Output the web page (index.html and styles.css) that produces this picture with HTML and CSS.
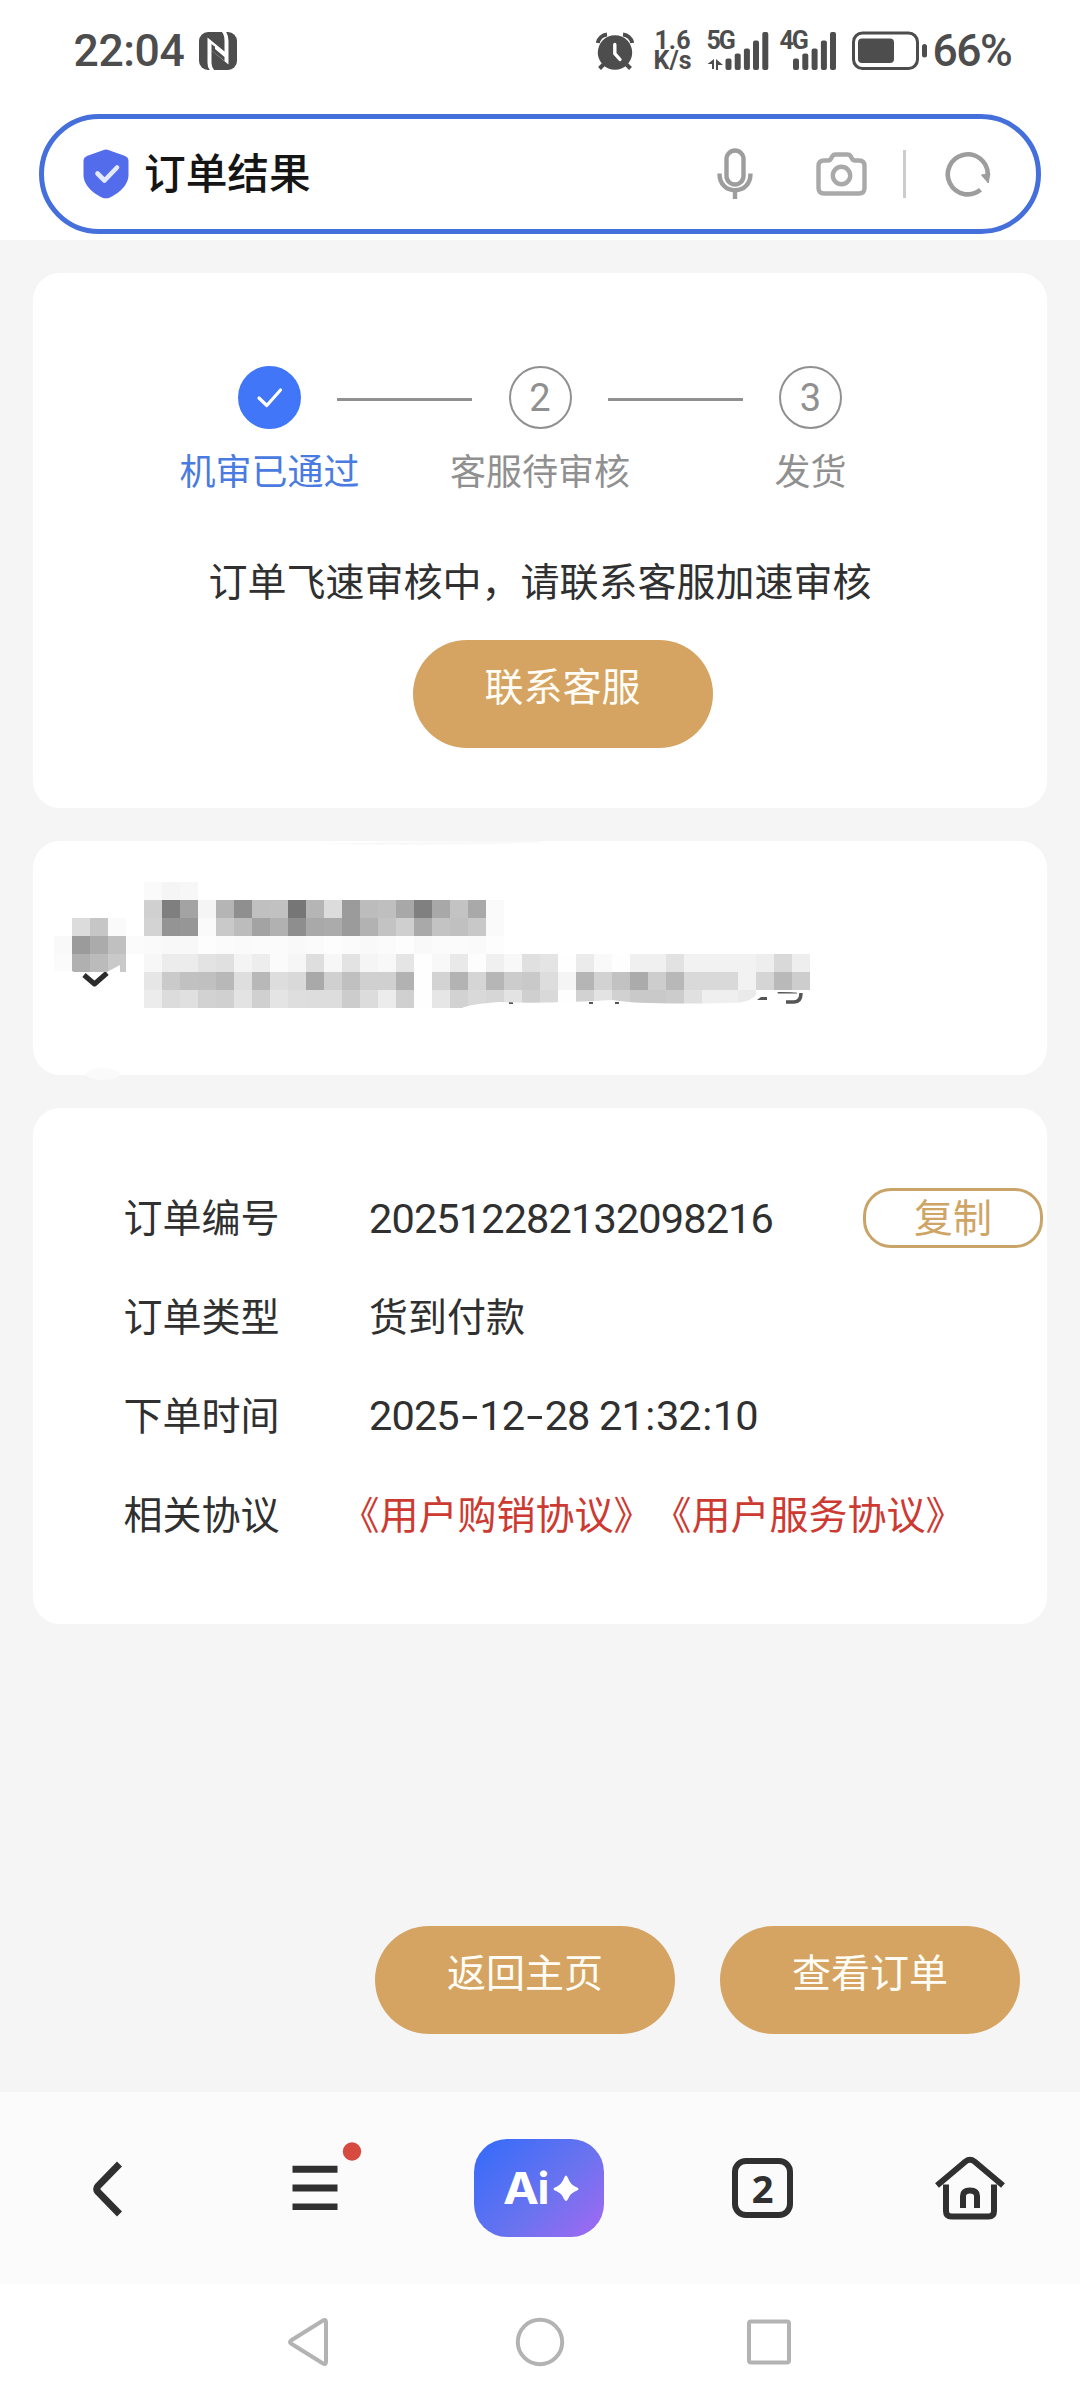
FILE: index.html
```html
<!DOCTYPE html>
<html lang="zh-CN">
<head>
<meta charset="utf-8">
<title>订单结果</title>
<link rel="stylesheet" href="styles.css">
</head>
<body>
<div class="screen">
  <header class="top">
    <div class="status">
      <span class="clock">22:04</span>
      <svg class="nfc" width="38" height="38" viewBox="0 0 38 38">
        <rect width="38" height="38" rx="9" fill="#4d4d4d"/>
        <path d="M12 39Q8.500 37 8.500 31V5.500L25.500 19.500V9Q25.500 2 22 -1L26.500 -1Q29.500 3 29.500 9V32.500L12.500 18.500V31Q12.500 35 16 39Z" fill="#fff"/>
        <path d="M12.500 12V18.500L25.500 29V25L16 17V14.800Z" fill="#4d4d4d"/>
      </svg>
      <svg class="alarm" width="38" height="38" viewBox="0 0 38 38">
        <circle cx="19" cy="20.500" r="17.200" fill="#4d4d4d"/>
        <path d="M1.800 11A10.500 10.500 0 0 1 11 2.500M36.200 11A10.500 10.500 0 0 0 27 2.500M7.500 32.500L3.500 36.500M30.500 32.500L34.500 36.500" fill="none" stroke="#4d4d4d" stroke-width="4"/>
        <path d="M18.800 12.500V21.500L24 27.500" fill="none" stroke="#fff" stroke-width="3.400" stroke-linecap="round"/>
      </svg>
      <span class="speed"><span>1.6</span><span>K/s</span></span>
      <span class="signal">
        <span class="net">5G</span>
        <svg width="64" height="40" viewBox="0 0 64 40">
          <path d="M7 28V38H5V33H0.500ZM9 28L16 34H11V39H9Z"/>
          <rect x="18.500" y="27.500" width="6" height="11.500" rx="2"/><rect x="27.700" y="22.500" width="6" height="16.500" rx="2"/><rect x="36.900" y="17.500" width="6" height="21.500" rx="2"/><rect x="46" y="9.500" width="6" height="29.500" rx="2"/><rect x="55.300" y="1" width="6" height="38" rx="2"/>
        </svg>
      </span>
      <span class="signal signal-b">
        <span class="net">4G</span>
        <svg width="58" height="40" viewBox="0 0 58 40">
          <rect x="13" y="27.500" width="6" height="11.500" rx="2"/><rect x="22.300" y="22.500" width="6" height="16.500" rx="2"/><rect x="31.600" y="17.500" width="6" height="21.500" rx="2"/><rect x="40.900" y="9.500" width="6" height="29.500" rx="2"/><rect x="50" y="1" width="6" height="38" rx="2"/>
        </svg>
      </span>
      <svg class="battery" width="76" height="40" viewBox="0 0 76 40">
        <rect x="1.500" y="2" width="64" height="35.500" rx="9" fill="none" stroke="#4d4d4d" stroke-width="3"/>
        <rect x="6" y="7.500" width="36" height="24.500" rx="4" fill="#4d4d4d"/>
        <rect x="70" y="13" width="5" height="13.500" rx="2.500" fill="#4d4d4d"/>
      </svg>
      <span class="percent">66%</span>
    </div>
    <div class="search">
      <svg class="shield" width="46" height="50" viewBox="0 0 46 50">
        <path d="M20 1.200Q23 0 26 1.200L41.500 6.700Q45.500 8.300 45.500 12V26C45.500 37 34 45.500 26.500 48.700Q23 50 19.500 48.700C12 45.500 0.500 37 0.500 26V12Q0.500 8.300 4.500 6.700Z" fill="#536cec"/>
        <path d="M14.500 24.500L21.500 31.500L34 18.500" fill="none" stroke="#e3e9ff" stroke-width="4.600" stroke-linecap="round" stroke-linejoin="round"/>
      </svg>
      <h1 class="title">订单结果</h1>
      <svg class="mic" width="36" height="52" viewBox="0 0 36 52" fill="none" stroke="#9d9d9d" stroke-width="4.400">
        <rect x="9.500" y="2.500" width="17" height="34" rx="8.500"/>
        <path d="M2.500 25.500C2.500 36 9 42.300 18 42.300S33.500 36 33.500 25.500M18 42V51"/>
      </svg>
      <svg class="camera" width="51" height="44" viewBox="0 0 51 44" fill="none" stroke="#a9a9a9" stroke-width="4.400">
        <path d="M8 8.500H12Q14 8.500 15 6.500L16.500 4Q17.500 2.500 19.500 2.500H31.500Q33.500 2.500 34.500 4L36 6.500Q37 8.500 39 8.500H43Q48.500 8.500 48.500 14V36Q48.500 41.500 43 41.500H8Q2.500 41.500 2.500 36V14Q2.500 8.500 8 8.500Z"/>
        <circle cx="25.500" cy="23.500" r="8.700"/>
      </svg>
      <span class="divider"></span>
      <svg class="refresh" width="46" height="46" viewBox="0 0 46 46">
        <path d="M35.500 38.800A20 20 0 1 1 42.800 23V25" fill="none" stroke="#9d9d9d" stroke-width="4.600"/>
        <path d="M36.500 24L44.800 22.500L43.300 32Z" fill="#9d9d9d" stroke="#9d9d9d" stroke-linejoin="round"/>
      </svg>
    </div>
  </header>

  <main class="content">
    <section class="card progress">
      <ol class="steps">
        <li class="step done">
          <span class="mark"><svg width="28" height="22" viewBox="0 0 28 22"><path d="M3 11L10.800 18.500L24.500 3" fill="none" stroke="#fff" stroke-width="3.200" stroke-linecap="round" stroke-linejoin="round"/></svg></span>
          <span class="label">机审已通过</span>
        </li>
        <li class="line"></li>
        <li class="step"><span class="mark">2</span><span class="label">客服待审核</span></li>
        <li class="line"></li>
        <li class="step"><span class="mark">3</span><span class="label">发货</span></li>
      </ol>
      <p class="message">订单飞速审核中，请联系客服加速审核</p>
      <button class="btn contact">联系客服</button>
    </section>

    <section class="card address">
      <svg class="mosaic" width="1014" height="240" viewBox="33 841 1014 240">
        <ellipse cx="103" cy="1074" rx="17" ry="6" fill="#fafafa"/>
        <path d="M320 844Q400 841 540 841V842.500Q440 846 320 844Z" fill="#f9f9f9"/>
        <path d="M84 975L94.500 984L107 973" fill="none" stroke="#2b2b2b" stroke-width="5" stroke-linejoin="round"/>
        <path d="M757 1000L761 997H767V1000ZM777 991L797 992.500V993.500H778ZM509 1002H513V1004H509ZM589 1002H593V1004H589ZM615 1002H619V1004H615Z" fill="#555"/>
        <path d="M786 1002H794Q801 1002 801 993" fill="none" stroke="#555" stroke-width="3.500"/>
        <clipPath id="wipe"><path d="M40 870H810V993Q777 991 757 993Q753 1003 730 1003Q640 1005 612 1000Q540 1004 500 1002Q470 1004 462 1008H120V965L107 972L95 976Q82 977 72 971H40Z"/></clipPath>
        <g id="cells" clip-path="url(#wipe)" shape-rendering="crispEdges"></g>
      </svg>
    </section>

    <section class="card details">
      <div class="row"><span class="key">订单编号</span><span class="value num">202512282132098216</span><button class="copy">复制</button></div>
      <div class="row"><span class="key">订单类型</span><span class="value">货到付款</span></div>
      <div class="row"><span class="key">下单时间</span><span class="value num date">2025<i>-</i>12<i>-</i>28 21<b>:</b>32<b>:</b>10</span></div>
      <div class="row"><span class="key">相关协议</span><span class="links"><a>《用户购销协议》</a><a>《用户服务协议》</a></span></div>
    </section>

    <div class="actions">
      <button class="btn">返回主页</button>
      <button class="btn">查看订单</button>
    </div>
  </main>

  <nav class="toolbar">
    <svg class="back" width="32" height="56" viewBox="0 0 32 56"><path d="M27.500 3L6 25Q3.500 28 6 31L27.500 53" fill="none" stroke="#303030" stroke-width="7"/></svg>
    <svg class="menu" width="70" height="68" viewBox="0 0 70 68"><path d="M0.500 27.200H45.500M0.500 46H45.500M0.500 65H45.500" stroke="#303030" stroke-width="7"/><circle cx="60" cy="9.500" r="9.200" fill="#d64a40"/></svg>
    <div class="ai">
      <svg width="130" height="98" viewBox="0 0 130 98">
        <text x="29" y="65" textLength="36" lengthAdjust="spacingAndGlyphs">A</text><text x="63.500" y="65">i</text>
        <path d="M92 36.500Q93 36.500 94 39Q96 46 104 49Q105 50 104 51Q96 54 94 60Q93 62 92 62Q91 62 90 60Q88 54 80 51Q79 50 80 49Q88 46 90 39Q91 36.500 92 36.500Z" fill="#fff"/>
      </svg>
    </div>
    <span class="tabs">2</span>
    <svg class="home" width="70" height="64" viewBox="0 0 70 64" fill="none" stroke="#303030" stroke-width="6">
      <path d="M2 29.500L30.500 5.500Q35 2 39.500 5.500L68 29.500"/>
      <path d="M11 28.500V55Q11 60.500 16.500 60.500H53.500Q59 60.500 59 55V28.500"/>
      <path d="M28 52V40Q28 34.500 35 34.500T42 40V52"/>
    </svg>
  </nav>

  <footer class="system">
    <svg width="42" height="50" viewBox="0 0 42 50"><path d="M36 3.500Q39 2 39 5V45Q39 48 36 46.500L4 26.500Q2 25 4 23.500Z"/></svg>
    <svg class="circle" width="50" height="50" viewBox="0 0 50 50"><circle cx="25" cy="25" r="22.200"/></svg>
    <svg width="44" height="46" viewBox="0 0 44 46"><rect x="2" y="2.500" width="40" height="41" rx="2"/></svg>
  </footer>
</div>
<script src="mosaic.js"></script>
</body>
</html>
```
FILE: styles.css
```css
* { box-sizing: border-box; margin: 0; padding: 0; }
body { background: #fff; font-family: Roboto, "Noto Sans CJK SC", sans-serif; color: #303030; }
svg { display: block; flex: none; }
button { font: inherit; border: 0; cursor: pointer; }
.screen { width: 1080px; height: 2400px; display: flex; flex-direction: column; overflow: hidden; }

.top { height: 240px; padding: 0 39px; background: #fff; }
.status { height: 114px; padding: 31px 0 0 34.500px; display: flex; align-items: flex-start; color: #4d4d4d; font-family: Roboto, sans-serif; font-weight: 500; }
.clock { width: 125px; font-size: 44.500px; line-height: 41px; letter-spacing: -.4px; }
.nfc { margin-top: 1px; }
.alarm { margin: 1px 0 0 359px; }
.speed { width: 40px; margin-left: 19px; display: flex; flex-direction: column; align-items: center; font-size: 25px; line-height: 20px; font-weight: 700; white-space: nowrap; }
.speed span { height: 20px; }
.signal { margin-left: 14px; display: grid; fill: #4d4d4d; }
.signal > * { grid-area: 1 / 1; }
.net { font-size: 25px; line-height: 20px; font-weight: 700; letter-spacing: -2px; }
.signal-b { margin-left: 9px; }
.battery { margin-left: 14px; }
.percent { margin-left: 5px; font-size: 44.500px; line-height: 41px; letter-spacing: -1.500px; }

.search { height: 120px; border: 5px solid #456fdb; border-radius: 60px; padding-left: 39px; display: flex; align-items: center; }
.title { margin: 2px 0 0 15px; width: 573px; font-size: 41.700px; font-weight: 500; line-height: 60px; color: #151515; }
.camera { margin-left: 63px; }
.divider { margin-left: 36px; width: 2.500px; height: 48px; background: #ccc; }
.refresh { margin-left: 39.500px; }

.content { height: 1852px; padding: 33px; background: #f5f5f5; display: flex; flex-direction: column; gap: 33px; }
.card { flex: none; width: 1014px; border-radius: 27px; background: #fff; }
.progress { height: 535px; padding-top: 93px; display: flex; flex-direction: column; align-items: center; }
.steps { width: 813px; list-style: none; display: flex; justify-content: center; }
.step { width: 135.500px; display: flex; flex-direction: column; align-items: center; color: #909090; white-space: nowrap; }
.mark { width: 63px; height: 63px; border: 2.500px solid #909090; border-radius: 50%; display: flex; align-items: center; justify-content: center; font-size: 38px; font-weight: 400; }
.label { margin-top: 17px; font-size: 36px; line-height: 54px; }
.done { color: #4a7be0; }
.done .mark { background: #4076f7; border-color: #4076f7; }
.line { width: 135px; height: 3px; margin-top: 32px; background: #909090; }
.message { margin-top: 54px; font-size: 39px; line-height: 58px; }
.btn { width: 300px; height: 108px; padding-bottom: 12px; border-radius: 54px; background: #d5a463; color: #fffdf5; font-size: 39px; line-height: 58px; }
.contact { margin: 28px 0 0 45px; }

.address { height: 234px; }
.mosaic { overflow: visible; }

.details { height: 516px; padding: 60px 0 0 90.500px; font-size: 39px; }
.row { height: 99px; display: flex; align-items: center; line-height: 58px; }
.key { width: 245.500px; flex: none; }
.key, .links, .value { padding-top: 2px; }
.num { font-size: 41.500px; letter-spacing: -.88px; width: 494px; flex: none; white-space: pre; }
.date { padding-top: 0; }
.date i { display: inline-block; width: 20.500px; text-align: center; font-style: normal; transform: scaleX(1.450); }
.date b { display: inline-block; width: 12px; text-align: center; font-weight: 400; }
.copy { width: 180px; height: 60px; flex: none; border: 3px solid #c9a468; border-radius: 28px; background: #fff; color: #cfa566; font-size: 39px; line-height: 50px; padding-top: 3px; }
.links { margin-left: -28.500px; color: #cd3a32; text-spacing-trim: space-all; white-space: nowrap; }

.actions { margin-top: 269px; padding-right: 27px; display: flex; justify-content: flex-end; gap: 45px; }

.toolbar { height: 192px; background: #fbfbfb; display: flex; align-items: flex-start; }
.back { margin: 68.500px 0 0 91.500px; }
.menu { margin: 49.500px 0 0 168.500px; }
.ai { margin: 47px 0 0 112px; width: 130px; height: 98px; border-radius: 33px; background: linear-gradient(135deg, #3a6cf8 8%, #6b73ef 58%, #a468f2 100%); }
.ai text { fill: #fff; font-family: Inter, sans-serif; font-weight: 700; font-size: 44px; }
.tabs { margin: 66px 0 0 128px; width: 61px; height: 60px; border: 6px solid #303030; border-radius: 14px; display: flex; align-items: center; justify-content: center; font: 700 38px/1 "Noto Sans", sans-serif; color: #303030; }
.home { margin: 64px 0 0 142px; }

.system { height: 116px; padding: 0 289px 0 287px; background: #fff; display: flex; align-items: center; justify-content: space-between; }
.system svg { fill: none; stroke: #b3b3b3; stroke-width: 4; }
.system .circle { margin-left: 3px; }
```
FILE: mosaic.js
```js
// Pixelated rows hiding the recipient: [x, y, two-digit hex gray levels], one level per 18px cell.
const rows = [
  [144, 882, "fa f5 f7"],
  [144, 900, "d0 7f a3 f5 b5 8f c0 c1 76 b5 dc 9b bc bf a8 80 a8 c3 a9 fa"],
  [144, 918, "d3 94 96 fa c9 bc a3 b1 8e a9 ab 9b b2 c3 cf a9 c3 c0 c8 fa"],
  [126, 936, "fb fa f8 f8 fd fb fa fb fb f9 fb fd fb f9 fb fd f9 fb fb fa fd"],
  [144, 954, "f7 ec ec e3 e0 f4 ed fb f6 de f7 e3 f5 f8 e5 fe f8 e9 fd f0 f8 e0 e4 fe eb f9 fe f0 f0 e2 f2 f2 f2 f2 ee d9 ee"],
  [144, 972, "e6 ca c1 c0 b8 de b8 dd d9 a9 d0 c0 d0 d0 b2 fe d3 b3 d5 b6 cc c9 dd f5 b5 d2 c2 ab cd b8 d9 d9 d9 f2 d5 b9 cd"],
  [144, 990, "ec dc e0 d2 d0 e3 d0 e4 de dd dd cc dc ec d0 fe e6 d2 d9 d6 e3 cf d9 fe d2 e3 d1 c9 c9 cc e0 ef ef ea fe fe fe"],
  [72, 918, "dc c6 fa"],
  [54, 936, "f9 9b ab c0"],
  [54, 954, "fb b0 bb c9"]
];
const group = document.getElementById("cells");
for (const [x, y, levels] of rows) {
  levels.split(" ").forEach((level, i) => {
    const cell = document.createElementNS("http://www.w3.org/2000/svg", "rect");
    cell.setAttribute("x", x + i * 18);
    cell.setAttribute("y", y);
    cell.setAttribute("width", 18);
    cell.setAttribute("height", 18);
    cell.setAttribute("fill", "#" + level + level + level);
    group.appendChild(cell);
  });
}
```
